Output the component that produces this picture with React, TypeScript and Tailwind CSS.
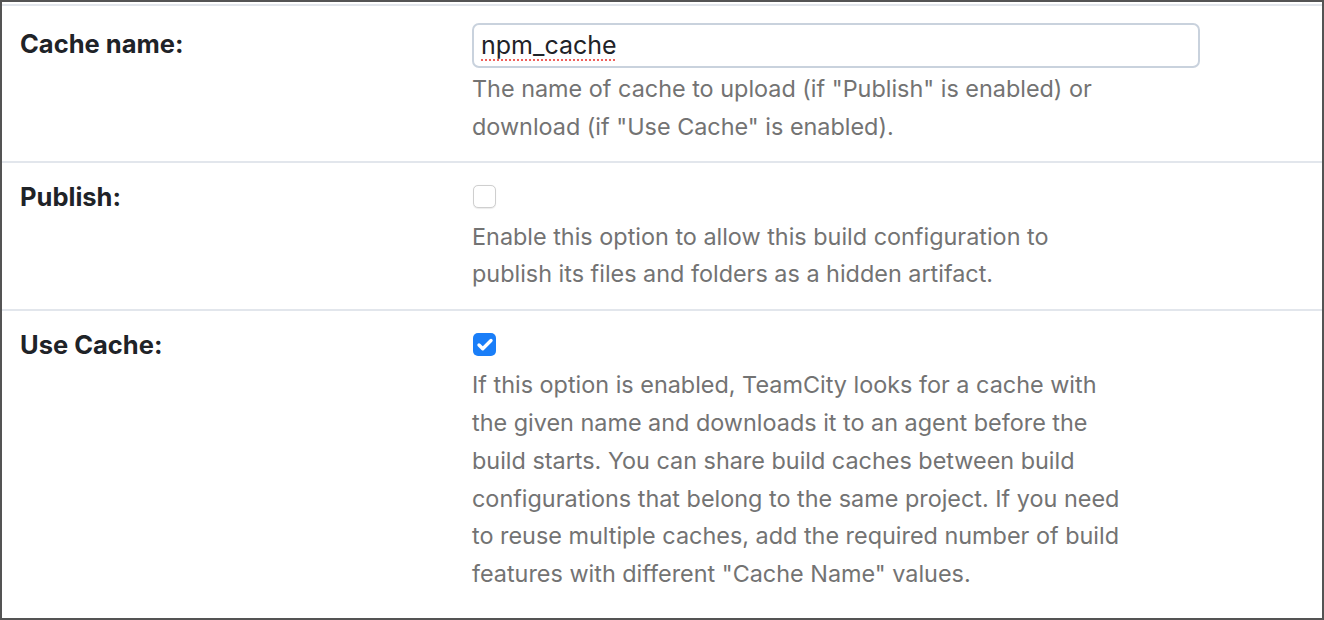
import { Check } from "lucide-react";

type Row = {
  label: string;
  control: "input" | "unchecked" | "checked";
  lines: string[];
};

const rows: Row[] = [
  {
    label: "Cache name:",
    control: "input",
    lines: [
      'The name of cache to upload (if "Publish" is enabled) or',
      'download (if "Use Cache" is enabled).',
    ],
  },
  {
    label: "Publish:",
    control: "unchecked",
    lines: [
      "Enable this option to allow this build configuration to",
      "publish its files and folders as a hidden artifact.",
    ],
  },
  {
    label: "Use Cache:",
    control: "checked",
    lines: [
      "If this option is enabled, TeamCity looks for a cache with",
      "the given name and downloads it to an agent before the",
      "build starts. You can share build caches between build",
      "configurations that belong to the same project. If you need",
      "to reuse multiple caches, add the required number of build",
      'features with different "Cache Name" values.',
    ],
  },
];

const Control = ({ kind }: { kind: Row["control"] }) => {
  if (kind === "input") {
    return (
      <div className="flex h-[45px] w-[728px] items-center rounded-[7px] border-2 border-[#c9d2dd] px-[7px]">
        <span className="text-[25px] text-[#1f2328] underline decoration-[#f0615c] decoration-dotted decoration-2 underline-offset-[6px]">
          npm_cache
        </span>
      </div>
    );
  }
  if (kind === "checked") {
    return (
      <div className="ml-[1px] mb-[8px] flex h-[23px] w-[23px] items-center justify-center rounded-[5px] bg-[#1a7ef8]">
        <Check size={18} strokeWidth={4.5} className="text-white" />
      </div>
    );
  }
  return (
    <div className="ml-[1px] mb-[8px] h-[23px] w-[23px] rounded-[5px] border border-[#cfcfcf] bg-white shadow-[0_0.5px_1px_rgba(0,0,0,0.08)]" />
  );
};

const App = () => {
  return (
    <div
      className="h-[620px] w-[1324px] overflow-hidden border-2 border-[#545454] bg-white pt-[2px]"
      style={{ fontFamily: "Inter, 'Noto Sans', sans-serif" }}
    >
      {rows.map((row) => (
        <div
          key={row.label}
          className={`flex border-t-2 border-[#e2e6ec] ${
            row.control === "input" ? "pt-[17px] pb-[15px]" : "pt-[22px] pb-[16px]"
          }`}
        >
          <div
            className={`w-[470px] shrink-0 pl-[18px] text-[25.5px] font-bold text-[#1f2328] ${
              row.control === "input" ? "pt-[2px]" : "-mt-[7px]"
            }`}
          >
            {row.label}
          </div>
          <div className="flex flex-col">
            <Control kind={row.control} />
            <div className="mt-[2px] text-[23.4px] leading-[37.8px] text-[#737373]">
              {row.lines.map((line) => (
                <div key={line}>{line}</div>
              ))}
            </div>
          </div>
        </div>
      ))}
    </div>
  );
};

export default App;
